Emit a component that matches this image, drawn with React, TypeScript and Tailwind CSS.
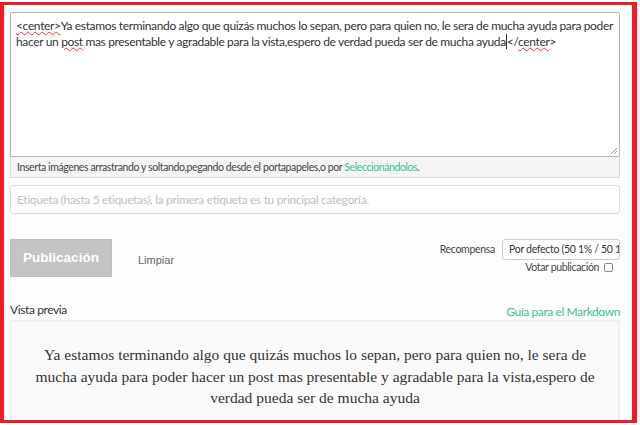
import React from "react";

export default function App() {
  return (
    <div className="w-[640px] h-[425px] bg-[#fdfdfd] overflow-hidden" style={{ fontFamily: "Lato, 'Liberation Sans', sans-serif" }}>
      <div className="mt-[2px] w-[637px] h-[421px] border-[#ed1c24] border-l-[4px] border-t-[3px] border-r-[5px] border-b-[3px] pl-[6px] pr-[12px] pt-[7px] overflow-hidden">
        <div className="w-[610px]">
          <div className="h-[145px] bg-white border border-[#b4b4b4] rounded-t-[2px] px-[5px] pt-[5px] text-[12px] tracking-[-0.35px] leading-[16px] text-[#333] relative">
            <div className="whitespace-nowrap">
              <span className="underline decoration-wavy decoration-red-500 decoration-1">&lt;center&gt;</span>Ya estamos terminando algo que quizás muchos lo sepan, pero para quien no, le sera de mucha ayuda para poder
            </div>
            <div className="whitespace-nowrap">
              hacer un <span className="underline decoration-wavy decoration-red-500 decoration-1">post</span> mas presentable y agradable para la vista,espero de verdad pueda ser de mucha ayuda<span className="border-l border-[#333]">&lt;/</span><span className="underline decoration-wavy decoration-red-500 decoration-1">center</span>&gt;
            </div>
            <svg className="absolute right-[1px] bottom-[1px]" width="8" height="8" viewBox="0 0 8 8">
              <path d="M7 1 L1 7 M7 4 L4 7" stroke="#999" strokeWidth="1" />
            </svg>
          </div>
          <div className="h-[21px] bg-[#f5f5f5] border border-t-0 border-[#dcdcdc] px-[6px] text-[10.5px] tracking-[-0.4px] leading-[20px] text-[#444] whitespace-nowrap">
            Inserta imágenes arrastrando y soltando,pegando desde el portapapeles,o por <span className="text-[#3cbf92]">Seleccionándolos</span>.
          </div>
          <div className="mt-[7px] h-[29px] bg-white border border-[#dcdcdc] rounded-[3px] px-[6px] text-[12px] tracking-[-0.35px] leading-[27px] text-[#c0c0c0] whitespace-nowrap">
            Etiqueta (hasta 5 etiquetas), la primera etiqueta es tu principal categoría.
          </div>
          <div className="mt-[25px] flex justify-between">
            <div className="flex items-center">
              <div className="w-[102px] h-[38px] bg-[#c4c4c4] border border-[#bdbdbd] text-white font-bold text-[13.5px] flex items-center justify-center" style={{ fontFamily: "'Liberation Sans', Arial, sans-serif" }}>
                Publicación
              </div>
              <div className="ml-[26px] mt-[4px] text-[11px] text-[#666]" style={{ fontFamily: "'Liberation Sans', Arial, sans-serif" }}>Limpiar</div>
            </div>
            <div className="flex flex-col items-end">
              <div className="flex items-center">
                <span className="text-[10.5px] tracking-[-0.3px] text-[#444] mr-[7px]">Recompensa</span>
                <div className="w-[118px] h-[21px] border border-[#ccc] rounded-[3px] bg-white px-[6px] text-[10.5px] tracking-[-0.3px] leading-[19px] text-[#333] overflow-hidden whitespace-nowrap">
                  Por defecto (50 1% / 50 1%)
                </div>
              </div>
              <div className="flex items-center mt-0 mr-[7px]">
                <span className="text-[10.5px] tracking-[-0.35px] leading-[14px] text-[#444] mr-[5px]">Votar publicación</span>
                <span className="w-[9px] h-[9px] border border-[#888] rounded-[2px] bg-white"></span>
              </div>
            </div>
          </div>
          <div className="mt-[24px] flex justify-between items-end">
            <span className="text-[12px] tracking-[-0.4px] text-[#333]">Vista previa</span>
            <span className="text-[12px] tracking-[-0.4px] text-[#3cbf92] mb-[-2px]">Guía para el Markdown</span>
          </div>
          <div className="mt-[1px] h-[120px] bg-[#fafafa] border-2 border-[#efefef] pt-[22px] px-[18px] text-center text-[15.5px] leading-[21.5px] text-[#333]" style={{ fontFamily: "'Liberation Serif', 'DejaVu Serif', serif" }}>
            Ya estamos terminando algo que quizás muchos lo sepan, pero para quien no, le sera de mucha ayuda para poder hacer un post mas presentable y agradable para la vista,espero de verdad pueda ser de mucha ayuda
          </div>
        </div>
      </div>
    </div>
  );
}
